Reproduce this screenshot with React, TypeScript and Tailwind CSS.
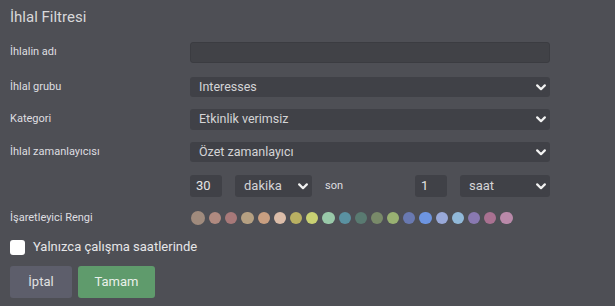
import React from "react";

const Chevron = () => (
  <svg width="10" height="7" viewBox="0 0 10 7" className="shrink-0">
    <polyline points="1.2,1.4 5,5.2 8.8,1.4" fill="none" stroke="#f2f2f2" strokeWidth="2.2" strokeLinecap="round" strokeLinejoin="round" />
  </svg>
);

const Select = ({ text, className }: { text: string; className: string }) => (
  <div className={"flex items-center justify-between rounded-[3px] bg-[#404147] pl-[9px] pr-[4px] text-[12.5px] text-[#d4d4d6] " + className}>
    <span>{text}</span>
    <Chevron />
  </div>
);

const colors = [
  "#a08b7d", "#b08a80", "#a87979", "#b5a082", "#c99f81", "#dcbda9", "#b9b062", "#c9d173",
  "#99c9a9", "#5a91a1", "#597a71", "#798a69", "#99b172", "#6979b1", "#6d95e1", "#99a9d9",
  "#91b9d9", "#8979b1", "#a97191", "#b989a9",
];

export default function App() {
  return (
    <div className="h-[306px] w-[615px] bg-[#4e4f55] px-[10px] font-['Roboto',sans-serif] text-[#dedee0]">
      <div className="flex h-[35px] items-center text-[15px] text-[#d8d8da]">İhlal Filtresi</div>

      <div className="mt-[7px] flex h-[21px] items-center">
        <div className="w-[180px] text-[11px]">İhlalin adı</div>
        <div className="h-full w-[360px] rounded-[3px] border border-[#3b3c41] bg-[#414247]" />
      </div>

      <div className="mt-[14px] flex h-[20px] items-center">
        <div className="w-[180px] text-[11px]">İhlal grubu</div>
        <Select text="Interesses" className="h-full w-[360px]" />
      </div>

      <div className="mt-[12px] flex h-[21px] items-center">
        <div className="w-[180px] text-[11px]">Kategori</div>
        <Select text="Etkinlik verimsiz" className="h-full w-[360px]" />
      </div>

      <div className="mt-[12px] flex h-[20px] items-center">
        <div className="w-[180px] text-[11px]">İhlal zamanlayıcısı</div>
        <Select text="Özet zamanlayıcı" className="h-full w-[360px]" />
      </div>

      <div className="mt-[13px] flex h-[22px] items-center pl-[180px]">
        <div className="flex h-full w-[32px] items-center rounded-[3px] bg-[#404147] pl-[6px] text-[13px] text-[#e4e4e4]">30</div>
        <Select text="dakika" className="ml-[13px] h-full w-[77px] text-[13px]" />
        <div className="ml-[13px] w-[90px] text-[11px]">son</div>
        <div className="flex h-full w-[32px] items-center rounded-[3px] bg-[#404147] pl-[6px] text-[13px] text-[#e4e4e4]">1</div>
        <Select text="saat" className="ml-[13px] h-full w-[90px] text-[13px]" />
      </div>

      <div className="mt-[14px] flex h-[14px] items-center">
        <div className="w-[181px] text-[11px]">İşaretleyici Rengi</div>
        <div className="flex items-center gap-[4px]">
          {colors.map((c, i) => (
            <div
              key={i}
              className={i === 0 ? "h-[14px] w-[14px] rounded-full" : "h-[12.2px] w-[12.2px] rounded-full"}
              style={{ backgroundColor: c }}
            />
          ))}
        </div>
      </div>

      <div className="mt-[14px] flex h-[16px] items-center">
        <div className="h-[15px] w-[15px] rounded-[3px] bg-white" />
        <div className="ml-[8px] text-[13px] text-[#e6e6e8]">Yalnızca çalışma saatlerinde</div>
      </div>

      <div className="mt-[11px] flex h-[32px] gap-[6px]">
        <div className="flex w-[62px] items-center justify-center rounded-[3px] bg-[#5d5e6b] text-[13px] text-[#e0e0e2]">İptal</div>
        <div className="flex w-[77px] items-center justify-center rounded-[3px] bg-[#5f9b6c] text-[13px] text-[#eaf0ea]">Tamam</div>
      </div>
    </div>
  );
}
